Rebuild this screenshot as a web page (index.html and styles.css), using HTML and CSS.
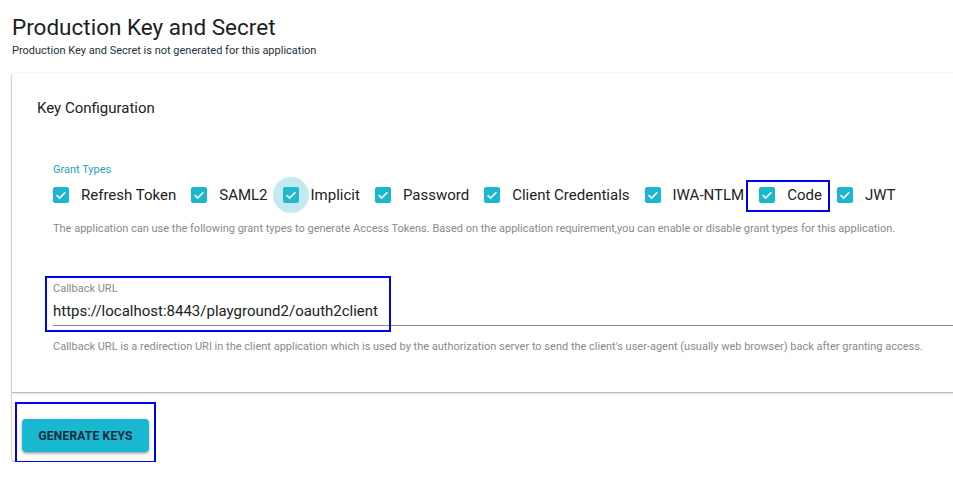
FILE: index.html
```html
<!DOCTYPE html>
<html>
<head>
<meta charset="utf-8">
<link rel="stylesheet" href="styles.css">
</head>
<body>
<div class="page">
  <h1 class="title">Production Key and Secret</h1>
  <p class="subtitle">Production Key and Secret is not generated for this application</p>
  <div class="card">
    <div class="config">
      <h2 class="config-title">Key Configuration</h2>
      <div class="grant">
        <div class="grant-label">Grant Types</div>
        <div class="grant-row">
          <label class="item"><span class="box"><svg viewBox="0 0 16 16"><path d="M3.6 8.2l3 2.9 5.8-5.8" /></svg></span><span class="lbl">Refresh Token</span></label>
          <label class="item"><span class="box"><svg viewBox="0 0 16 16"><path d="M3.6 8.2l3 2.9 5.8-5.8" /></svg></span><span class="lbl">SAML2</span></label>
          <label class="item focus"><span class="halo"></span><span class="box"><svg viewBox="0 0 16 16"><path d="M3.6 8.2l3 2.9 5.8-5.8" /></svg></span><span class="lbl">Implicit</span></label>
          <label class="item"><span class="box"><svg viewBox="0 0 16 16"><path d="M3.6 8.2l3 2.9 5.8-5.8" /></svg></span><span class="lbl">Password</span></label>
          <label class="item"><span class="box"><svg viewBox="0 0 16 16"><path d="M3.6 8.2l3 2.9 5.8-5.8" /></svg></span><span class="lbl">Client Credentials</span></label>
          <label class="item"><span class="box"><svg viewBox="0 0 16 16"><path d="M3.6 8.2l3 2.9 5.8-5.8" /></svg></span><span class="lbl">IWA-NTLM</span></label>
          <label class="item marked code"><span class="box"><svg viewBox="0 0 16 16"><path d="M3.6 8.2l3 2.9 5.8-5.8" /></svg></span><span class="lbl">Code</span></label>
          <label class="item"><span class="box"><svg viewBox="0 0 16 16"><path d="M3.6 8.2l3 2.9 5.8-5.8" /></svg></span><span class="lbl">JWT</span></label>
        </div>
        <p class="helper">The application can use the following grant types to generate Access Tokens. Based on the application requirement,you can enable or disable grant types for this application.</p>
      </div>
      <div class="callback">
        <div class="field marked">
          <div class="field-label">Callback URL</div>
          <div class="field-input">https://localhost:8443/playground2/oauth2client</div>
        </div>
        <p class="helper helper2">Callback URL is a redirection URI in the client application which is used by the authorization server to send the client's user-agent (usually web browser) back after granting access.</p>
      </div>
    </div>
    <div class="actions">
      <button class="btn marked">GENERATE KEYS</button>
    </div>
  </div>
</div>
</body>
</html>
```
FILE: styles.css
```css
html, body {
  margin: 0;
  padding: 0;
  overflow: hidden;
  background: #fff;
}
body {
  font-family: Roboto, "Open Sans", sans-serif;
  color: #222;
}
.page {
  padding: 13px 0 0 12px;
}
.title {
  margin: 0;
  font-size: 22.5px;
  line-height: 28px;
  font-weight: 400;
  color: #1e1e1e;
}
.subtitle {
  margin: 2px 0 0;
  font-size: 11px;
  line-height: 16px;
  color: #26323d;
}
.card {
  margin-top: 14px;
  width: 1000px;
  background: #fff;
  border-radius: 4px;
  box-shadow: 0 1px 3px rgba(0,0,0,0.22), 0 1px 1px rgba(0,0,0,0.14), 0 2px 1px -1px rgba(0,0,0,0.12), -1px 0 0 rgba(0,0,0,0.08);
}
.config {
  padding: 25px 0 37px 25px;
  border-bottom: 1px solid #bdbdbd;
  box-shadow: 0 1px 2px rgba(0,0,0,0.12);
  border-radius: 4px 4px 0 0;
}
.config-title {
  margin: 0;
  font-size: 15px;
  line-height: 20px;
  font-weight: 400;
  color: #222;
}
.grant {
  margin: 44px 0 0 16px;
}
.grant-label {
  font-size: 11px;
  line-height: 16px;
  color: #27a3bf;
}
.grant-row {
  display: flex;
  align-items: center;
  height: 32px;
  margin-top: 1px;
}
.item {
  position: relative;
  display: flex;
  align-items: center;
  gap: 12px;
  margin-right: 15px;
  height: 32px;
}
.box {
  position: relative;
  width: 16px;
  height: 16px;
  border-radius: 2px;
  background: #1bb7cf;
  display: block;
}
.box svg {
  display: block;
  width: 16px;
  height: 16px;
  fill: none;
  stroke: #fff;
  stroke-width: 1.6;
}
.halo {
  position: absolute;
  left: -10px;
  top: -2px;
  width: 36px;
  height: 36px;
  border-radius: 50%;
  background: #c3eaf1;
}
.focus .box {
  background: #22b9d0;
}
.lbl {
  font-size: 15px;
  line-height: 20px;
  color: #222;
  white-space: nowrap;
}
.helper {
  margin: 10px 0 0;
  font-size: 11px;
  line-height: 16px;
  color: #8a8a8a;
  white-space: nowrap;
}
.callback {
  margin: 44px 0 0 16px;
}
.field {
  position: relative;
}
.field-label {
  font-size: 11px;
  line-height: 16px;
  color: #8a8a8a;
}
.field-input {
  margin-top: 4px;
  font-size: 15px;
  line-height: 20px;
  color: #222;
  padding-bottom: 4px;
  border-bottom: 1px solid #8c8c8c;
}
.helper2 {
  margin-top: 13px;
}
.actions {
  padding: 26px 0 10px 10px;
}
.btn {
  position: relative;
  height: 33px;
  width: 127px;
  border: none;
  border-radius: 4px;
  background: #17b8d0;
  color: #18293a;
  font-family: Roboto, sans-serif;
  font-weight: 700;
  font-size: 12px;
  letter-spacing: 0.2px;
  box-shadow: 0 1px 5px rgba(0,0,0,0.2), 0 2px 2px rgba(0,0,0,0.14), 0 3px 1px -2px rgba(0,0,0,0.12);
  padding: 0;
}
.marked::after {
  content: "";
  position: absolute;
  border: 2px solid #0000f5;
  pointer-events: none;
}
.code::after {
  left: -13px;
  right: -8px;
  top: 1px;
  bottom: -1px;
}
.field.marked::after {
  left: -8px;
  top: -5px;
  width: 342px;
  height: 52px;
}
.btn.marked::after {
  left: -7px;
  top: -17px;
  width: 137px;
  height: 57px;
}
```
